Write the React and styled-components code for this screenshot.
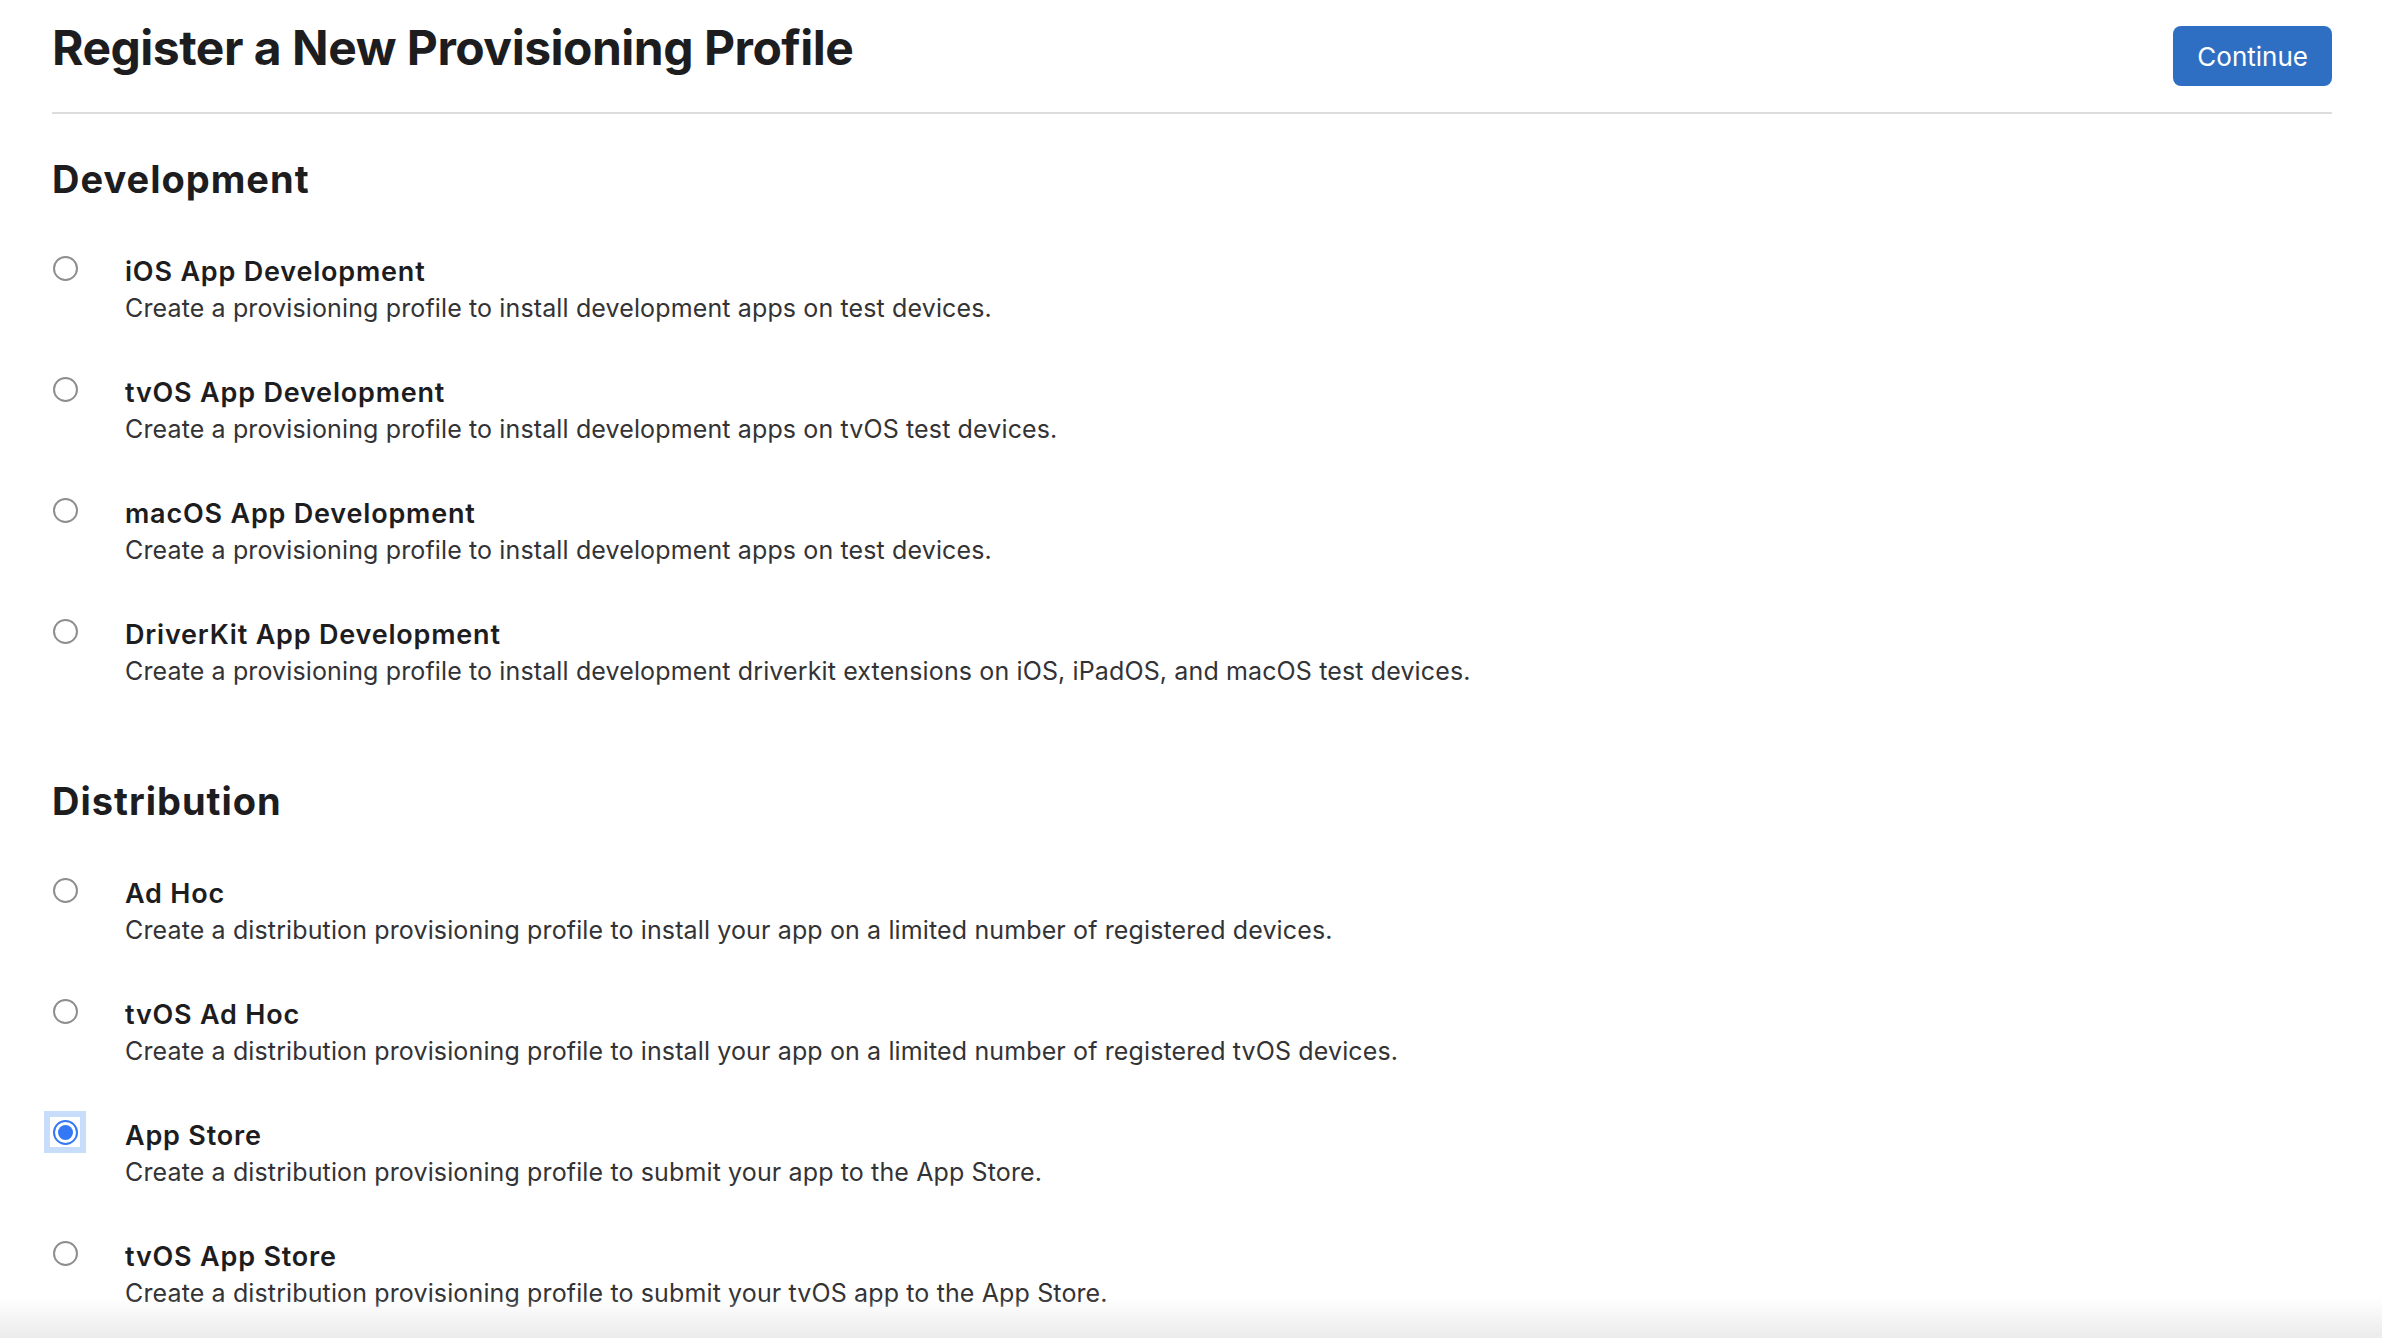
import React from "react";
import styled, { createGlobalStyle } from "styled-components";

const Global = createGlobalStyle`
  html, body { margin: 0; padding: 0; background: #fff; overflow: hidden; }
  body { font-family: Inter, "Noto Sans", "Liberation Sans", sans-serif; color: #1d1d1f; }
  * { box-sizing: border-box; }
`;

const Page = styled.div`
  padding: 0 50px 0 52px;
  height: 1338px;
`;

const Header = styled.header`
  display: flex;
  justify-content: space-between;
  align-items: flex-start;
  height: 114px;
  border-bottom: 2px solid #dcdcdc;
`;

const Title = styled.h1`
  margin: 19px 0 0;
  font-size: 48px;
  line-height: 58px;
  font-weight: 700;
  letter-spacing: -0.5px;
  color: #1d1d1f;
`;

const Button = styled.button`
  margin-top: 26px;
  height: 60px;
  padding: 0 24px;
  border: none;
  border-radius: 8px;
  background: #2f6fc3;
  color: #fff;
  font-family: inherit;
  font-size: 26px;
  font-weight: 400;
`;

const Section = styled.section`
  padding-top: ${(p) => p.$top}px;
`;

const Heading = styled.h2`
  margin: 0 0 54px;
  font-size: 38px;
  line-height: 45px;
  font-weight: 700;
  letter-spacing: 1px;
  color: #1d1d1f;
`;

const List = styled.div`
  display: flex;
  flex-direction: column;
  gap: 53px;
`;

const Row = styled.label`
  display: grid;
  grid-template-columns: 73px 1fr;
  align-items: start;
`;

const RadioBox = styled.span`
  width: 26px;
  height: 26px;
  margin-top: -1px;
  display: flex;
  align-items: center;
  justify-content: center;
  background: #fff;
  box-shadow: ${(p) => (p.$checked ? "0 0 0 2px #fff, 0 0 0 8px #c7ddfa" : "none")};
`;

const RadioCircle = styled.span`
  width: 25px;
  height: 25px;
  border-radius: 50%;
  border: 2px solid ${(p) => (p.$checked ? "#3478f6" : "#8e8e8e")};
  background: #fff;
  display: flex;
  align-items: center;
  justify-content: center;
`;

const Dot = styled.span`
  width: 15px;
  height: 15px;
  border-radius: 50%;
  background: #3478f6;
`;

const Texts = styled.div`
  display: flex;
  flex-direction: column;
`;

const Label = styled.div`
  font-size: 27px;
  line-height: 32px;
  font-weight: 600;
  letter-spacing: 0.8px;
  color: #1d1d1f;
`;

const Desc = styled.div`
  margin-top: 4px;
  font-size: 25px;
  line-height: 32px;
  font-weight: 400;
  letter-spacing: 0.13px;
  color: #333336;
`;

const BottomFade = styled.div`
  position: fixed;
  left: 0;
  right: 0;
  bottom: 0;
  height: 40px;
  background: linear-gradient(to bottom, rgba(235, 235, 235, 0), #ebebeb);
  pointer-events: none;
`;

const development = [
  ["iOS App Development", "Create a provisioning profile to install development apps on test devices."],
  ["tvOS App Development", "Create a provisioning profile to install development apps on tvOS test devices."],
  ["macOS App Development", "Create a provisioning profile to install development apps on test devices."],
  ["DriverKit App Development", "Create a provisioning profile to install development driverkit extensions on iOS, iPadOS, and macOS test devices."],
];

const distribution = [
  ["Ad Hoc", "Create a distribution provisioning profile to install your app on a limited number of registered devices."],
  ["tvOS Ad Hoc", "Create a distribution provisioning profile to install your app on a limited number of registered tvOS devices."],
  ["App Store", "Create a distribution provisioning profile to submit your app to the App Store."],
  ["tvOS App Store", "Create a distribution provisioning profile to submit your tvOS app to the App Store."],
];

function Option({ label, desc, checked }) {
  return (
    <Row>
      <RadioBox $checked={checked}>
        <RadioCircle $checked={checked}>{checked && <Dot />}</RadioCircle>
      </RadioBox>
      <Texts>
        <Label>{label}</Label>
        <Desc>{desc}</Desc>
      </Texts>
    </Row>
  );
}

export default function App() {
  return (
    <>
      <Global />
      <Page>
        <Header>
          <Title>Register a New Provisioning Profile</Title>
          <Button>Continue</Button>
        </Header>
        <Section $top={43}>
          <Heading>Development</Heading>
          <List>
            {development.map(([l, d]) => (
              <Option key={l} label={l} desc={d} />
            ))}
          </List>
        </Section>
        <Section $top={92}>
          <Heading>Distribution</Heading>
          <List>
            {distribution.map(([l, d]) => (
              <Option key={l} label={l} desc={d} checked={l === "App Store"} />
            ))}
          </List>
        </Section>
      </Page>
      <BottomFade />
    </>
  );
}
